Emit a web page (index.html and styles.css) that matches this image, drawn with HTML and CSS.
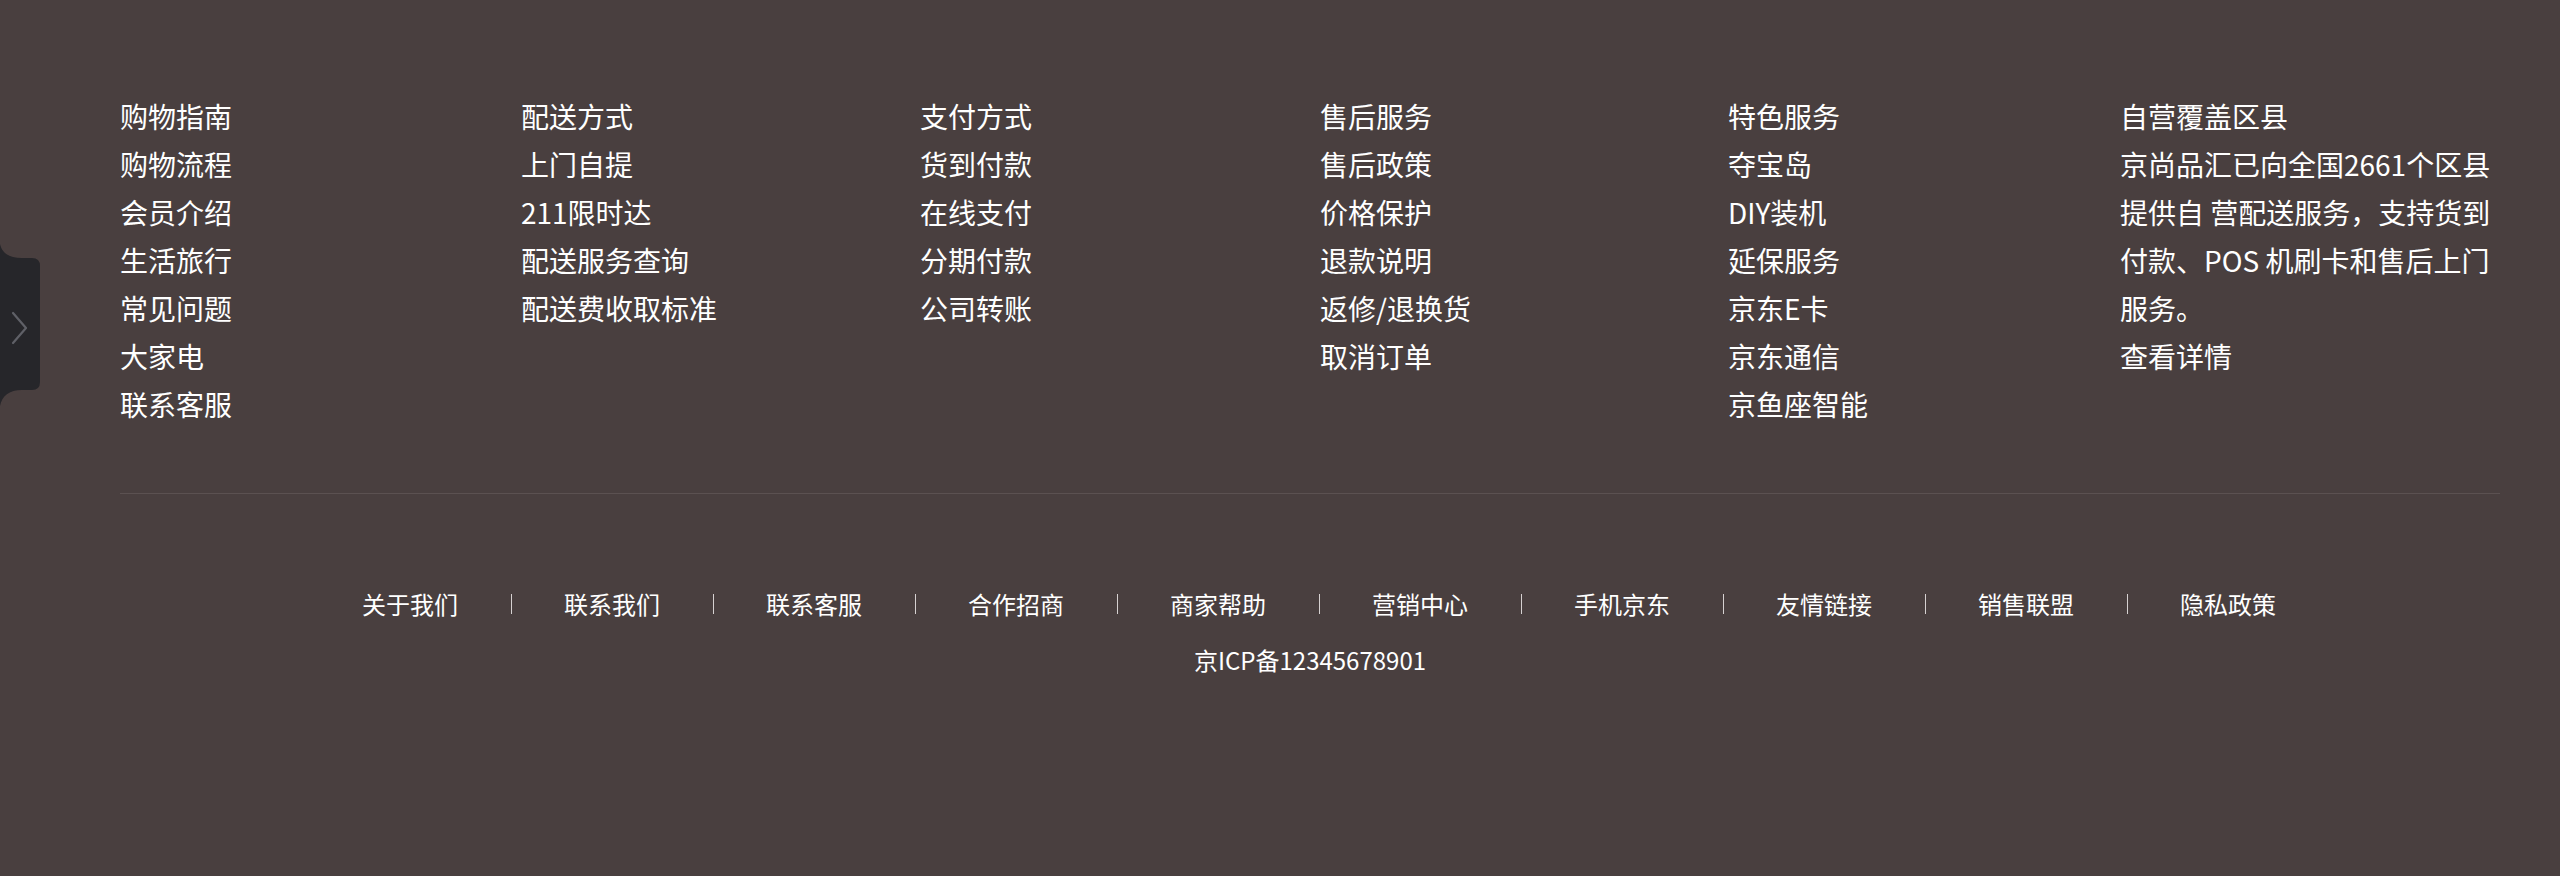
FILE: index.html
```html
<!DOCTYPE html>
<html lang="zh-CN">
<head>
<meta charset="utf-8">
<title>Footer</title>
<link rel="stylesheet" href="styles.css">
</head>
<body>
<div class="side-tab">
  <svg width="40" height="170" viewBox="0 0 40 170">
    <path d="M0,4 C2,13 9,18 22,18 L32,18 Q40,18 40,26 L40,142 Q40,150 32,150 L22,150 C9,150 2,156 0,166 Z" fill="#26262a"/>
    <path d="M13,73 L26,88 L13,103" fill="none" stroke="#5f6067" stroke-width="2.2" stroke-linecap="round" stroke-linejoin="round"/>
  </svg>
</div>
<footer class="footer">
  <div class="columns">
    <ul class="col">
      <li>购物指南</li><li>购物流程</li><li>会员介绍</li><li>生活旅行</li><li>常见问题</li><li>大家电</li><li>联系客服</li>
    </ul>
    <ul class="col">
      <li>配送方式</li><li>上门自提</li><li>211限时达</li><li>配送服务查询</li><li>配送费收取标准</li>
    </ul>
    <ul class="col">
      <li>支付方式</li><li>货到付款</li><li>在线支付</li><li>分期付款</li><li>公司转账</li>
    </ul>
    <ul class="col">
      <li>售后服务</li><li>售后政策</li><li>价格保护</li><li>退款说明</li><li>返修/退换货</li><li>取消订单</li>
    </ul>
    <ul class="col">
      <li>特色服务</li><li>夺宝岛</li><li>DIY装机</li><li>延保服务</li><li>京东E卡</li><li>京东通信</li><li>京鱼座智能</li>
    </ul>
    <div class="col coverage">
      <div>自营覆盖区县</div>
      <p>京尚品汇已向全国2661个区县提供自 营配送服务，支持货到付款、POS 机刷卡和售后上门服务。</p>
      <div>查看详情</div>
    </div>
  </div>
  <div class="divider"></div>
  <nav class="links">
    <span>关于我们</span><i class="sep"></i>
    <span>联系我们</span><i class="sep"></i>
    <span>联系客服</span><i class="sep"></i>
    <span>合作招商</span><i class="sep"></i>
    <span>商家帮助</span><i class="sep"></i>
    <span>营销中心</span><i class="sep"></i>
    <span>手机京东</span><i class="sep"></i>
    <span>友情链接</span><i class="sep"></i>
    <span>销售联盟</span><i class="sep"></i>
    <span>隐私政策</span>
  </nav>
  <div class="icp">京ICP备12345678901</div>
</footer>
</body>
</html>
```
FILE: styles.css
```css
html, body {
  margin: 0;
  padding: 0;
}
body {
  background: #493f3f;
  color: #ffffff;
  font-family: "Noto Sans CJK SC", "Noto Sans", sans-serif;
  min-height: 876px;
}
.side-tab {
  position: absolute;
  left: 0;
  top: 240px;
  width: 40px;
  height: 170px;
}
.side-tab svg {
  display: block;
}
.footer {
  padding: 92px 60px 0 120px;
}
.columns {
  display: grid;
  grid-template-columns: 401px 399px 400px 408px 392px 380px;
  font-size: 28px;
  line-height: 48px;
}
.col {
  list-style: none;
  margin: 0;
  padding: 0;
}
.coverage p {
  margin: 0;
  width: 380px;
}
.divider {
  height: 1px;
  background: #5b5151;
  margin-top: 65px;
}
.links {
  display: flex;
  justify-content: center;
  align-items: center;
  margin-top: 92px;
  padding-left: 18px;
  font-size: 24px;
  line-height: 36px;
}
.sep {
  display: block;
  width: 1px;
  height: 20px;
  margin: 0 52.5px;
  background: #d6d1d1;
}
.icp {
  margin-top: 20px;
  text-align: center;
  font-size: 24px;
  line-height: 36px;
}
```
